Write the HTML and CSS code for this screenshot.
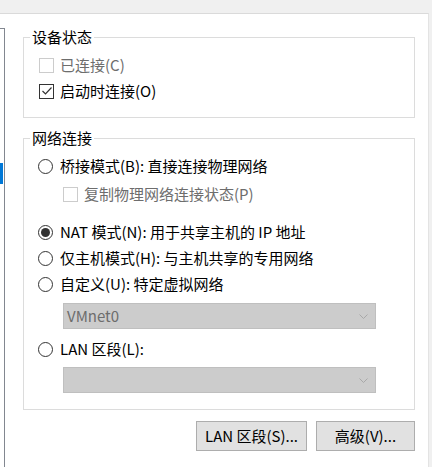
FILE: index.html
```html
<!DOCTYPE html>
<html lang="zh-CN">
<head>
    <meta charset="UTF-8">
    <title>网络适配器</title>
    <link rel="stylesheet" href="styles.css">
</head>
<body>

    <div class="topbar"></div>

    <div class="panel">
        <!-- 左侧设备列表 (截图中只露出右边缘) -->
        <div class="devices">
            <div class="device-selected"></div>
        </div>

        <div class="settings">
            <section class="group group-status">
                <span class="group-title">设备状态</span>
                <label class="option is-disabled">
                    <span class="checkbox"></span>已连接(C)
                </label>
                <label class="option">
                    <span class="checkbox is-checked">
                        <svg width="12" height="12" viewBox="0 0 12 12"><polyline points="1.5,6 4.5,9 10.5,2.5" fill="none" stroke="#333" stroke-width="1.2"/></svg>
                    </span>启动时连接(O)
                </label>
            </section>

            <section class="group group-network">
                <span class="group-title">网络连接</span>
                <label class="option">
                    <span class="radio"></span>桥接模式(B): 直接连接物理网络
                </label>
                <label class="option option-sub is-disabled">
                    <span class="checkbox"></span>复制物理网络连接状态(P)
                </label>
                <label class="option option-nat">
                    <span class="radio is-checked"></span>NAT 模式(N): 用于共享主机的 IP 地址
                </label>
                <label class="option">
                    <span class="radio"></span>仅主机模式(H): 与主机共享的专用网络
                </label>
                <label class="option">
                    <span class="radio"></span>自定义(U): 特定虚拟网络
                </label>
                <div class="select select-vmnet">
                    <span>VMnet0</span>
                    <svg width="9" height="5" viewBox="0 0 9 5"><polyline points="0.5,0.5 4.5,4.5 8.5,0.5" fill="none" stroke="#a8a8a8" stroke-width="1"/></svg>
                </div>
                <label class="option option-lan">
                    <span class="radio"></span>LAN 区段(L):
                </label>
                <div class="select select-lan">
                    <span></span>
                    <svg width="9" height="5" viewBox="0 0 9 5"><polyline points="0.5,0.5 4.5,4.5 8.5,0.5" fill="none" stroke="#a8a8a8" stroke-width="1"/></svg>
                </div>
            </section>

            <div class="actions">
                <button class="btn btn-lan">LAN 区段(S)...</button>
                <button class="btn btn-advanced">高级(V)...</button>
            </div>
        </div>
    </div>

</body>
</html>
```

FILE: styles.css
```css
/* 基本设置 */
html, body {
    margin: 0;
    padding: 0;
    width: 432px;
    height: 467px;
    overflow: hidden;
    background: #f0f0f0;
    font-family: "Noto Sans CJK SC", sans-serif;
    font-size: 15px;
    color: #000;
}

.topbar {
    height: 13px;
}

.panel {
    display: flex;
    width: 428px;
    height: 454px;
    background: #fff;
    border-top: 1px solid #dadada;
    border-right: 1px solid #e3e3e3;
}

/* 设备列表边缘 */
.devices {
    width: 4px;
    margin-top: 14px;
    border-top: 1px solid #828790;
    border-right: 1px solid #828790;
}

.device-selected {
    width: 3px;
    height: 21px;
    margin-top: 134px;
    background: #0078d7;
}

.settings {
    padding-left: 18px;
    width: 392px;
}

/* 分组框 */
.group {
    position: relative;
    border: 1px solid #dcdcdc;
    padding-left: 15px;
}

.group-status {
    margin-top: 23px;
    padding-top: 14px;
    padding-bottom: 13px;
}

.group-network {
    margin-top: 20px;
    padding-top: 14px;
    padding-bottom: 16px;
}

.group-title {
    position: absolute;
    top: -11px;
    left: 6px;
    padding: 0 2px;
    background: #fff;
    line-height: 20px;
}

/* 选项行 */
.option {
    display: flex;
    align-items: center;
    gap: 7px;
    height: 26px;
    line-height: 26px;
    white-space: nowrap;
}

.option.is-disabled {
    color: #6d6d6d;
}

.option-sub {
    margin-top: 2px;
    margin-left: 24px;
}

.option-nat {
    margin-top: 12px;
}

.option-lan {
    margin-top: 7px;
}

.checkbox {
    display: flex;
    align-items: center;
    justify-content: center;
    width: 15px;
    height: 15px;
    box-sizing: border-box;
    border: 1px solid #333;
    background: #fff;
    margin-right: -1px;
}

.is-disabled .checkbox {
    border-color: #cccccc;
}

.radio {
    position: relative;
    width: 15px;
    height: 15px;
    margin-left: -1px;
    box-sizing: border-box;
    border: 1px solid #333;
    border-radius: 50%;
    background: #fff;
}

.radio.is-checked::after {
    content: "";
    position: absolute;
    top: 2px;
    left: 2px;
    width: 9px;
    height: 9px;
    border-radius: 50%;
    background: #333;
}

/* 下拉框 (禁用) */
.select {
    display: flex;
    align-items: center;
    justify-content: space-between;
    width: 313px;
    height: 26px;
    margin-left: 24px;
    box-sizing: border-box;
    border: 1px solid #bfbfbf;
    background: #cccccc;
    padding: 0 7px 0 3px;
    color: #6d6d6d;
    line-height: 24px;
}

.select-vmnet {
    margin-top: 6px;
}

.select-lan {
    margin-top: 5px;
}

/* 底部按钮 */
.actions {
    display: flex;
    justify-content: flex-end;
    gap: 9px;
    margin-top: 11px;
}

.btn {
    height: 30px;
    padding: 0;
    font-family: inherit;
    font-size: 15px;
    color: #000;
    background: #e1e1e1;
    border: 1px solid #adadad;
    line-height: 28px;
}

.btn-lan {
    width: 111px;
}

.btn-advanced {
    width: 99px;
}
```
